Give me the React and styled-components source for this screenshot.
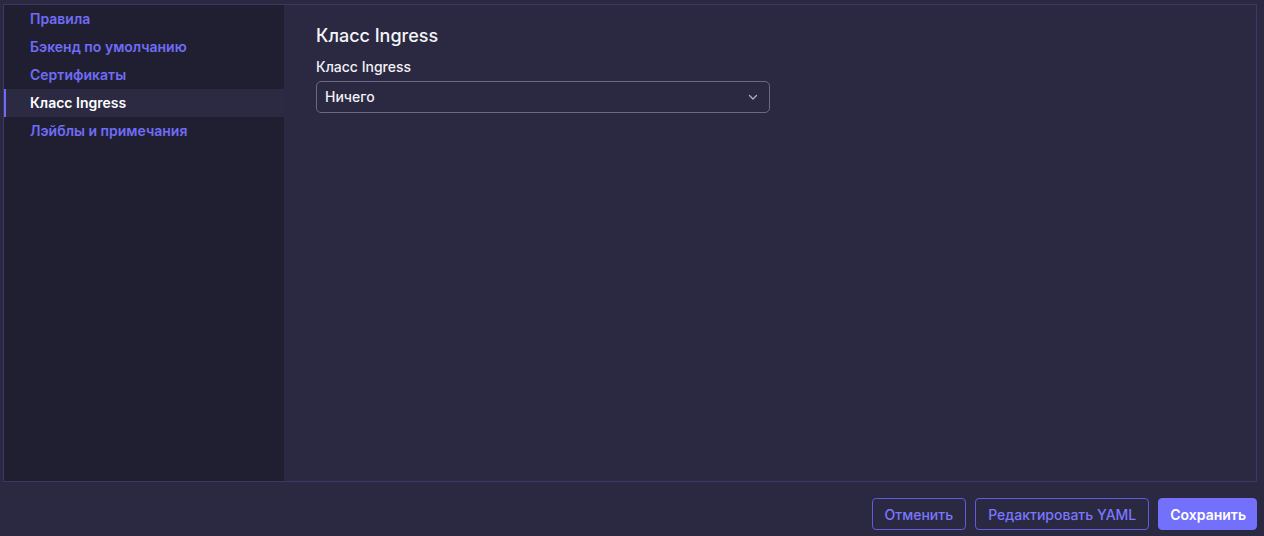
import React from "react";
import styled, { createGlobalStyle } from "styled-components";

const Global = createGlobalStyle`
  html, body { margin: 0; padding: 0; }
  body {
    background: #2a2941;
    font-family: Inter, "Noto Sans", sans-serif;
    color: #f2f2f7;
  }
`;

const Page = styled.div`
  display: flex;
  flex-direction: column;
  height: 536px;
  padding: 4px 7px 0 3px;
  box-sizing: border-box;
`;

const Panel = styled.div`
  display: flex;
  height: 478px;
  border: 1px solid #3b3866;
  box-sizing: border-box;
`;

const Sidebar = styled.nav`
  width: 280px;
  background: #201f32;
  display: flex;
  flex-direction: column;
`;

const NavItem = styled.div`
  height: 28px;
  display: flex;
  align-items: center;
  padding-left: ${(p) => (p.$active ? "24px" : "26px")};
  padding-bottom: 1px;
  box-sizing: border-box;
  border-left: ${(p) => (p.$active ? "2px solid #6e6cf7" : "none")};
  background: ${(p) => (p.$active ? "#2c2a43" : "transparent")};
  color: ${(p) => (p.$active ? "#ffffff" : "#6f6cf6")};
  font-size: 14px;
  font-weight: 600;
`;

const Content = styled.main`
  flex: 1;
  padding: 20px 32px;
`;

const Title = styled.h2`
  margin: 0;
  font-size: 18px;
  font-weight: 500;
  line-height: 22px;
  color: #f4f4f8;
`;

const Field = styled.div`
  margin-top: 11px;
  display: flex;
  flex-direction: column;
  width: 454px;
`;

const Label = styled.label`
  font-size: 14px;
  font-weight: 500;
  line-height: 18px;
  color: #f2f2f7;
  margin-bottom: 5px;
`;

const Select = styled.div`
  height: 32px;
  box-sizing: border-box;
  border: 1px solid #6a6982;
  border-radius: 5px;
  display: flex;
  align-items: center;
  justify-content: space-between;
  padding: 0 10px 1px 8px;
  font-size: 14px;
  font-weight: 500;
  color: #f2f2f7;
`;

const Footer = styled.footer`
  display: flex;
  justify-content: flex-end;
  gap: 9px;
  padding-top: 16px;
`;

const Button = styled.button`
  height: 32px;
  box-sizing: border-box;
  padding: ${(p) => (p.$primary ? "0 10px 0 11px" : "0 12px")};
  border-radius: 4px;
  font-family: inherit;
  font-size: 14px;
  font-weight: ${(p) => (p.$primary ? 600 : 500)};
  border: 1px solid ${(p) => (p.$primary ? "#7370fb" : "#5f5cdf")};
  background: ${(p) => (p.$primary ? "#7370fb" : "transparent")};
  color: ${(p) => (p.$primary ? "#ffffff" : "#7a77ff")};
  cursor: pointer;
`;

const Chevron = () => (
  <svg width="12" height="12" viewBox="0 0 12 12" fill="none">
    <path d="M2.5 4.5 L6 8 L9.5 4.5" stroke="#b0afc4" strokeWidth="1.3" strokeLinecap="round" strokeLinejoin="round" />
  </svg>
);

const items = [
  "Правила",
  "Бэкенд по умолчанию",
  "Сертификаты",
  "Класс Ingress",
  "Лэйблы и примечания",
];

export default function App() {
  return (
    <>
      <Global />
      <Page>
        <Panel>
          <Sidebar>
            {items.map((t, i) => (
              <NavItem key={t} $active={i === 3}>
                {t}
              </NavItem>
            ))}
          </Sidebar>
          <Content>
            <Title>Класс Ingress</Title>
            <Field>
              <Label>Класс Ingress</Label>
              <Select>
                <span>Ничего</span>
                <Chevron />
              </Select>
            </Field>
          </Content>
        </Panel>
        <Footer>
          <Button>Отменить</Button>
          <Button>Редактировать YAML</Button>
          <Button $primary>Сохранить</Button>
        </Footer>
      </Page>
    </>
  );
}
